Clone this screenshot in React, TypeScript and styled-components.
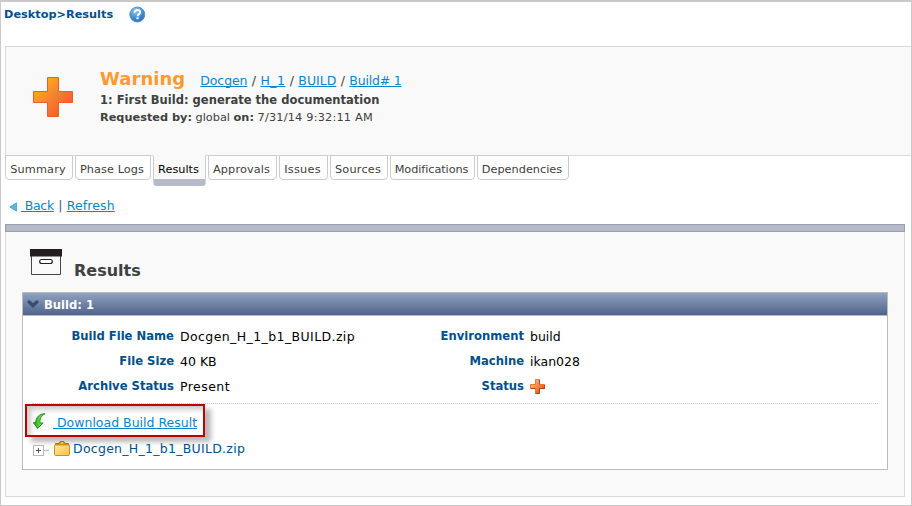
import React from 'react';
import styled, { createGlobalStyle, css } from 'styled-components';

const GlobalStyle = createGlobalStyle`
  * { box-sizing: border-box; }
  body { margin: 0; background: #fff; font-family: Verdana, "DejaVu Sans", sans-serif; color: #404040; }
`;

type Tracked = { $track?: number };
const tracking = css<Tracked>`letter-spacing: ${p => p.$track ?? 0}px;`;

const Page = styled.div`
  width: 912px;
  height: 506px;
  border: 1px solid #c9c9c9;
  border-top-width: 2px;
  overflow: hidden;
  white-space: nowrap;
`;

const Location = styled.div`
  display: flex;
  align-items: center;
  height: 24px;
  padding-left: 3px;
  gap: 16px;
  font-size: 11.3px;
  font-weight: bold;
  color: #00508c;
`;

const Header = styled.header`
  display: flex;
  height: 110px;
  margin: 20px 0 0 4px;
  padding: 20px 0 0 27px;
  border: 1px solid #dadada;
  border-right: 0;
  background: #f9f9f9;
`;

const HeaderIcon = styled.div`
  width: 67px;
  padding-top: 10px;
`;

const HeaderTop = styled.div`
  display: flex;
  align-items: baseline;
  gap: 15px;
  height: 24px;
  line-height: 24px;
`;

const StatusName = styled.h1`
  margin: 0;
  font-size: 18px;
  letter-spacing: 0.05px;
  color: #ff9933;
`;

const Crumbs = styled.nav`
  display: flex;
  font-size: 12.5px;
`;

const Slash = styled.span`
  width: 13px;
  text-align: center;
`;

const Link = styled.a<Tracked>`
  color: #0a84cc;
  text-decoration: underline;
  text-decoration-thickness: 1px;
  text-underline-offset: 1px;
  text-decoration-skip-ink: none;
  white-space: pre;
  ${tracking}
`;

const BuildTitle = styled.div`
  font-size: 11.5px;
  font-weight: bold;
  letter-spacing: 0.03px;
  line-height: 18px;
`;

const Requested = styled.div`
  padding-top: 1px;
  font-size: 11.3px;
  line-height: 16px;
`;

const RequestDate = styled.span<Tracked>`
  ${tracking}
`;

const Tabs = styled.div`
  display: flex;
  align-items: flex-start;
  gap: 2px;
  height: 31px;
  margin: -1px 0 0 4px;
`;

const Tab = styled.div<{ $width: number; $active?: boolean } & Tracked>`
  width: ${p => p.$width}px;
  height: 25px;
  padding-right: 2px;
  border: 1px solid #cccccc;
  border-radius: 0 0 4px 4px;
  background: #fff;
  font-size: 11.3px;
  line-height: 28px;
  text-align: center;
  ${tracking}
  ${p => p.$active && css`
    height: 31px;
    border-top-color: #f9f9f9;
    border-bottom: 7px solid #b4bac7;
    background: #f9f9f9;
    color: #000;
  `}
`;

const TabEdge = styled.div`
  flex: 1;
  margin-left: -2px;
  border-top: 1px solid #dadada;
`;

const Actions = styled.div`
  display: flex;
  align-items: center;
  height: 38px;
  padding: 1px 0 0 8px;
  font-size: 12.5px;
`;

const BackArrow = styled.svg`
  margin: 2px 4px 0 0;
`;

const Divider = styled.span`
  width: 13px;
  text-align: center;
  color: #3c5a96;
`;

const PanelBar = styled.div`
  width: 900px;
  height: 8px;
  margin-left: 4px;
  border: 1px solid #98a0ac;
  background: #b4bac7;
`;

const Panel = styled.section`
  width: 900px;
  height: 265px;
  margin-left: 4px;
  padding: 0 16px;
  border: 1px solid #dadada;
  border-top: 0;
  background: #f9f9f9;
`;

const PanelHeading = styled.div`
  display: flex;
  height: 60px;
  padding: 17px 0 0 8px;
  gap: 12px;
`;

const PanelTitle = styled.h2`
  margin: 11px 0 0;
  font-size: 16px;
  line-height: 22px;
`;

const BuildBox = styled.div`
  width: 866px;
  height: 178px;
  border: 1px solid #bcbcbc;
  background: #fff;
`;

const BuildBar = styled.div`
  display: flex;
  align-items: center;
  height: 23px;
  padding-left: 4px;
  gap: 5px;
  border-bottom: 1px solid #b4bccb;
  background: linear-gradient(#90a2c0, #50648a);
  color: #fff;
  font-size: 11.6px;
  font-weight: bold;
  line-height: 22px;
`;

const BuildName = styled.span`
  padding-top: 1px;
`;

const Details = styled.dl`
  display: grid;
  grid-template-columns: 142px 268px 82px 1fr;
  grid-auto-rows: 25px;
  align-items: center;
  margin: 0 9px;
  height: 88px;
  padding-top: 8px;
  border-bottom: 1px dotted #c4c4c4;
  line-height: 25px;
`;

const Label = styled.dt`
  margin-left: -9px;
  display: flex;
  justify-content: flex-end;
  font-size: 11.6px;
  font-weight: bold;
  color: #00508c;
`;

const Value = styled.dd<Tracked>`
  display: flex;
  align-items: center;
  margin: 0;
  padding-left: 6px;
  font-size: 12.5px;
  color: #000;
  ${tracking}
`;

const Download = styled.div`
  display: flex;
  align-items: center;
  width: 180px;
  height: 33px;
  margin-left: 2px;
  padding-left: 6px;
  gap: 6px;
  border: 2px solid #c00000;
  box-shadow: 6px 5px 5px rgba(0, 0, 0, 0.28), inset 5px 5px 5px -1px rgba(0, 0, 0, 0.2);
  font-size: 12.5px;
`;

const DownloadLink = styled(Link)`
  padding-top: 3px;
`;

const TreeRow = styled.div`
  display: flex;
  align-items: center;
  height: 23px;
  padding-left: 10px;
  font-size: 12.5px;
  line-height: 23px;
`;

const Expander = styled.svg`
  margin-top: 3px;
  margin-right: 4px;
`;

const FileName = styled.span<Tracked>`
  margin-left: 3px;
  color: #00508c;
  ${tracking}
`;

const HelpIcon = () => (
  <svg width="17" height="17" viewBox="0 0 17 17">
    <defs>
      <radialGradient id="help" cx="40%" cy="25%" r="80%">
        <stop offset="0" stopColor="#9cc9ec" />
        <stop offset="0.55" stopColor="#4a93d2" />
        <stop offset="1" stopColor="#2468ae" />
      </radialGradient>
    </defs>
    <circle cx="8.3" cy="8.5" r="7.5" fill="url(#help)" stroke="#5b93c6" />
    <path d="M5.6 6.7C5.5 3.1 11.4 3.2 11.2 6.4C11.1 8.2 8.6 8.1 8.6 10.2" fill="none" stroke="#fff" strokeWidth="1.9" />
    <rect x="7.5" y="11.3" width="2.1" height="2" fill="#fff" />
  </svg>
);

const WarningIcon = () => (
  <svg width="40" height="40" viewBox="0 0 40 40">
    <defs>
      <linearGradient id="warn" x1="0" y1="0" x2="1" y2="1">
        <stop offset="0.15" stopColor="#fbb015" />
        <stop offset="0.5" stopColor="#f58033" />
        <stop offset="0.8" stopColor="#f4622a" />
      </linearGradient>
    </defs>
    <path d="M14.5.5h11v14h14v11h-14v14h-11v-14H.5v-11h14z" fill="url(#warn)" stroke="#f15a29" />
  </svg>
);

const StatusIcon = () => (
  <svg width="15" height="15" viewBox="0 0 15 15">
    <defs>
      <linearGradient id="status" x1="0" y1="0" x2="1" y2="1">
        <stop offset="0.2" stopColor="#fbb269" />
        <stop offset="0.8" stopColor="#ec5a1c" />
      </linearGradient>
    </defs>
    <path d="M5.5.5h4v5h5v4h-5v5h-4v-5h-5v-4h5z" fill="url(#status)" stroke="#e8772f" />
    <path d="M9.5 1v4.5M14.5 6v3.5h-5v5h-4M1 9.5h4.5" fill="none" stroke="#a5491e" />
  </svg>
);

const ArchiveIcon = () => (
  <svg width="32" height="27" viewBox="0 0 32 27">
    <path d="M1.5 7v18.5h29V7" fill="#f9f9f9" stroke="#4a4647" />
    <path d="M0 0h32v7.5H0z" fill="#231f20" />
    <rect x="9.7" y="10.5" width="12.6" height="4" rx="2" fill="#fff" stroke="#231f20" strokeWidth="1.2" />
  </svg>
);

const ChevronIcon = () => (
  <svg width="12" height="8" viewBox="0 0 12 8">
    <path d="M0 2L2 0l4 3.3L10 0l2 2-6 6z" fill="#354b75" />
  </svg>
);

const DownloadIcon = () => (
  <svg width="14" height="17" viewBox="0 0 14 17">
    <defs>
      <linearGradient id="down" x1="0" y1="0" x2="1" y2="0">
        <stop offset="0" stopColor="#1c9b1b" />
        <stop offset="0.6" stopColor="#65dc43" />
        <stop offset="1" stopColor="#219c20" />
      </linearGradient>
    </defs>
    <g transform="translate(-0.5 1)">
      <path d="M12.5.8C7 .6 3.3 4.2 3.2 9.8L.8 9.6 5 15.4 10.7 10H7.6C7 6.1 8.5 2.6 12.5.8z" fill="url(#down)" stroke="#16881d" strokeWidth="0.9" />
    </g>
  </svg>
);

const FolderIcon = () => (
  <svg width="16" height="15" viewBox="0 0 16 15">
    <defs>
      <linearGradient id="folder" x1="0" y1="0" x2="1" y2="1">
        <stop offset="0" stopColor="#ffe9a0" />
        <stop offset="1" stopColor="#f3c03f" />
      </linearGradient>
    </defs>
    <path d="M1.5 2.5h3.7l.8-2h4l.8 2h3.7v3h-13z" fill="#d69a18" stroke="#a87410" />
    <path d="M7 1.5h2v1H7z" fill="#ffe5a0" />
    <rect x="0.5" y="4" width="15" height="10.5" rx="1" fill="url(#folder)" stroke="#c1912f" />
  </svg>
);

const tabs = [
  { name: 'Summary', width: 68, track: 0.15 },
  { name: 'Phase Logs', width: 76, track: 0.06 },
  { name: 'Results', width: 53, track: 0 },
  { name: 'Approvals', width: 69, track: 0.12 },
  { name: 'Issues', width: 49, track: 0.25 },
  { name: 'Sources', width: 58, track: 0.2 },
  { name: 'Modifications', width: 85, track: -0.08 },
  { name: 'Dependencies', width: 92, track: 0 },
];

export default function App() {
  return (
    <Page>
      <GlobalStyle />
      <Location><span>Desktop&gt;Results</span><HelpIcon /></Location>
      <Header>
        <HeaderIcon><WarningIcon /></HeaderIcon>
        <div>
          <HeaderTop>
            <StatusName>Warning</StatusName>
            <Crumbs>
              <Link $track={-0.1}>Docgen</Link><Slash>/</Slash>
              <Link $track={0.45}>H_1</Link><Slash>/</Slash>
              <Link>BUILD</Link><Slash>/</Slash>
              <Link $track={-0.2}>Build# 1</Link>
            </Crumbs>
          </HeaderTop>
          <BuildTitle>1: First Build: generate the documentation</BuildTitle>
          <Requested><b>Requested by:</b> global <b>on:</b> <RequestDate $track={0.2}>7/31/14 9:32:11 AM</RequestDate></Requested>
        </div>
      </Header>
      <Tabs>
        {tabs.map(t => (
          <Tab key={t.name} $width={t.width} $track={t.track} $active={t.name === 'Results'}>{t.name}</Tab>
        ))}
        <TabEdge />
      </Tabs>
      <Actions>
        <BackArrow width="8" height="10" viewBox="0 0 8 10">
          <path d="M7.5.8v8.4L.8 5z" fill="#62b5e2" stroke="#3b9bd0" strokeWidth="0.8" />
        </BackArrow>
        <Link $track={-0.3}> Back</Link><Divider>|</Divider><Link $track={0.1}>Refresh</Link>
      </Actions>
      <PanelBar />
      <Panel>
        <PanelHeading>
          <ArchiveIcon />
          <PanelTitle>Results</PanelTitle>
        </PanelHeading>
        <BuildBox>
          <BuildBar><ChevronIcon /><BuildName>Build: 1</BuildName></BuildBar>
          <Details>
            <Label>Build File Name</Label><Value $track={0.4}>Docgen_H_1_b1_BUILD.zip</Value>
            <Label>Environment</Label><Value>build</Value>
            <Label>File Size</Label><Value>40 KB</Value>
            <Label>Machine</Label><Value>ikan028</Value>
            <Label>Archive Status</Label><Value $track={0.45}>Present</Value>
            <Label>Status</Label><Value><StatusIcon /></Value>
          </Details>
          <Download><DownloadIcon /><DownloadLink> Download Build Result</DownloadLink></Download>
          <TreeRow>
            <Expander width="17" height="11" viewBox="0 0 17 11">
              <rect x="0.5" y="0.5" width="10" height="10" fill="#fff" stroke="#b8b8b8" />
              <path d="M3 5.5h5M5.5 3v5" stroke="#555" />
              <path d="M11 5.5h5" stroke="#b8b8b8" />
            </Expander>
            <FolderIcon />
            <FileName $track={0.27}>Docgen_H_1_b1_BUILD.zip</FileName>
          </TreeRow>
        </BuildBox>
      </Panel>
    </Page>
  );
}
